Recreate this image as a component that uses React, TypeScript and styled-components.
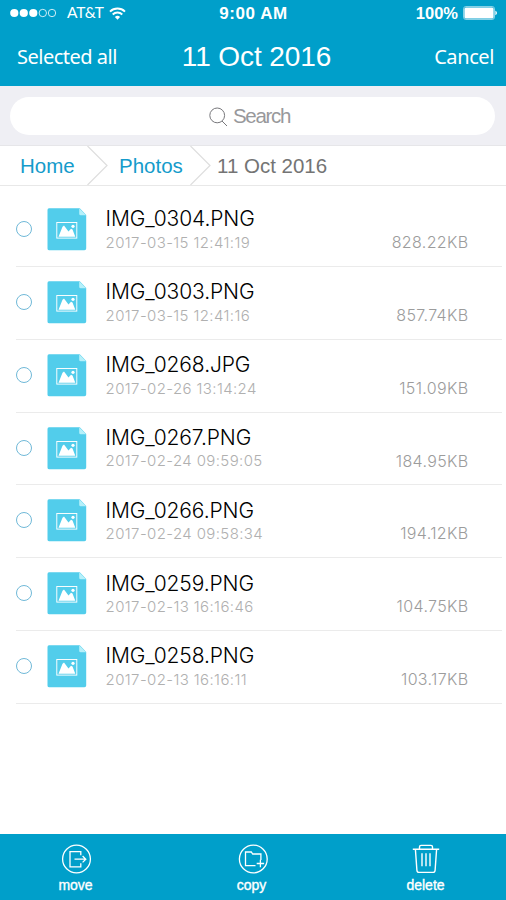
import React from "react";
import styled, { createGlobalStyle } from "styled-components";

const GlobalStyle = createGlobalStyle`
  * { box-sizing: border-box; }
  body { margin: 0; background: #fff; font-family: "Liberation Sans", Arial, sans-serif; }
`;

const Screen = styled.div`
  width: 506px;
  height: 900px;
  display: flex;
  flex-direction: column;
  overflow: hidden;
  background: #fff;
`;

const Header = styled.header`
  flex: none;
  height: 86px;
  background: #009fca;
  color: #fff;
`;

const Bar = styled.div<{ $height: number; $padding: string }>`
  height: ${(p) => p.$height}px;
  padding: ${(p) => p.$padding};
  display: grid;
  grid-template-columns: 1fr auto 1fr;
  align-items: center;
`;

const Cluster = styled.div<{ $end?: boolean }>`
  display: flex;
  align-items: center;
  justify-content: ${(p) => (p.$end ? "flex-end" : "flex-start")};
`;

const Label = styled.span<{ $size: number; $spacing?: number; $font?: string; $weight?: number }>`
  font-family: ${(p) => p.$font ?? '"Liberation Sans"'}, sans-serif;
  font-size: ${(p) => p.$size}px;
  font-weight: ${(p) => p.$weight ?? 400};
  letter-spacing: ${(p) => p.$spacing ?? 0}px;
  line-height: 1;
  white-space: nowrap;
`;

const Carrier = styled(Label)`
  margin: 0 5px 0 10px;
`;

const Percent = styled(Label)`
  margin-right: 5px;
  padding-top: 1px;
`;

const Title = styled.h1`
  margin: 0;
  padding: 1px 0 0 2px;
  font-size: 28px;
  line-height: 32px;
  font-weight: 400;
  letter-spacing: -0.1px;
`;

const NavButton = styled.button<{ $end?: boolean }>`
  justify-self: ${(p) => (p.$end ? "end" : "start")};
  border: 0;
  padding: 2px 0 0;
  background: none;
  color: #fff;
  font: 400 20px/24px "Noto Sans", sans-serif;
  letter-spacing: ${(p) => (p.$end ? -0.4 : -0.5)}px;
  white-space: nowrap;
`;

const SearchArea = styled.div`
  flex: none;
  height: 60px;
  padding: 11px 11px 11px 10px;
  background: #efeff4;
  border-bottom: 1px solid #e6e6e9;
`;

const SearchField = styled.div`
  height: 38px;
  border-radius: 19px;
  background: #fff;
  color: #98989b;
  display: flex;
  align-items: center;
  padding: 1px 0 0 199px;
  gap: 5px;
`;

const Crumbs = styled.nav`
  flex: none;
  height: 40px;
  display: flex;
  align-items: center;
  border-bottom: 1px solid #e8e8e8;
`;

const Crumb = styled.span<{ $current?: boolean; $width?: number; $left: number }>`
  flex: none;
  width: ${(p) => (p.$width ? `${p.$width}px` : "auto")};
  padding-left: ${(p) => p.$left}px;
  padding-top: 1px;
  font-size: 20.5px;
  line-height: 24px;
  white-space: nowrap;
  color: ${(p) => (p.$current ? "#747474" : "#149bcb")};
`;

const FileList = styled.ul`
  flex: 1;
  margin: 0;
  padding: 8px 0 0;
  list-style: none;
`;

const FileRow = styled.li`
  height: 72.86px;
  margin: 0 4px 0 16px;
  padding-right: 34px;
  display: flex;
  border-bottom: 1px solid #ebebeb;
`;

const Radio = styled.span`
  width: 16px;
  height: 16px;
  margin: 27px 15px 0 0;
  border: 1px solid #70b9d8;
  border-radius: 50%;
`;

const FileIcon = styled.svg`
  width: 40px;
  height: 43px;
  margin-top: 14px;
`;

const FileText = styled.div`
  flex: 1;
  margin-left: 18.6px;
  padding-top: 12.3px;
  font-family: Inter, sans-serif;
  white-space: nowrap;
`;

const FileName = styled.div`
  font-size: 21px;
  line-height: 26px;
  letter-spacing: -0.1px;
  font-weight: 350;
  color: #000;
`;

const FileDate = styled.div`
  font-size: 15px;
  line-height: 20px;
  margin-top: 0.6px;
  letter-spacing: 0.38px;
  font-weight: 350;
  color: #b0b0b0;
`;

const FileSize = styled.div`
  align-self: flex-start;
  margin-top: 38px;
  font: 350 16px/20px Inter, sans-serif;
  letter-spacing: 0.36px;
  margin-right: -0.5px;
  color: #9c9c9c;
`;

const Footer = styled.footer`
  flex: none;
  height: 66px;
  display: grid;
  grid-template-columns: 151px 201px 147px;
  background: #009fca;
`;

const Action = styled.button`
  border: 0;
  padding: 9px 0 0;
  background: none;
  color: #fff;
  display: flex;
  flex-direction: column;
  align-items: center;
  gap: 2px;
`;

const ActionLabel = styled(Label)`
  -webkit-text-stroke: 0.35px #fff;
  line-height: 16px;
`;

const files = [
  ["IMG_0304.PNG", "2017-03-15 12:41:19", "828.22KB"],
  ["IMG_0303.PNG", "2017-03-15 12:41:16", "857.74KB"],
  ["IMG_0268.JPG", "2017-02-26 13:14:24", "151.09KB"],
  ["IMG_0267.PNG", "2017-02-24 09:59:05", "184.95KB"],
  ["IMG_0266.PNG", "2017-02-24 09:58:34", "194.12KB"],
  ["IMG_0259.PNG", "2017-02-13 16:16:46", "104.75KB"],
  ["IMG_0258.PNG", "2017-02-13 16:16:11", "103.17KB"],
];

const Signal = () => (
  <svg width="47" height="10" viewBox="0 0 47 10">
    {[4.3, 13.8, 23.3].map((x) => <circle key={x} cx={x} cy="5" r="4.1" fill="#fff" />)}
    {[32.8, 42].map((x) => <circle key={x} cx={x} cy="5" r="3.7" fill="none" stroke="#fff" strokeWidth=".8" />)}
  </svg>
);

const Wifi = () => (
  <svg width="17" height="13" viewBox="0 0 17 13" fill="none" stroke="#fff" strokeWidth="1.9">
    <path d="M1 4.6a10.8 10.8 0 0 1 15 0M3.7 7.5a6.9 6.9 0 0 1 9.6 0" />
    <path d="M8.5 12.7 5.9 10a3.8 3.8 0 0 1 5.2 0Z" fill="#fff" stroke="none" />
  </svg>
);

const Battery = () => (
  <svg width="34" height="14" viewBox="0 0 34 14">
    <rect x=".5" y=".5" width="31" height="13" rx="2.4" fill="none" stroke="#a8deee" strokeWidth=".8" />
    <rect x="1.4" y="1.4" width="29.2" height="11.2" rx="1.5" fill="#fff" />
    <path d="M32.4 4.8c2 .7 2 3.7 0 4.4Z" fill="#fff" />
  </svg>
);

const Magnifier = () => (
  <svg width="19" height="20" viewBox="0 0 19 20" fill="none" stroke="#77777b" strokeWidth="1">
    <circle cx="8.2" cy="8.4" r="7.4" />
    <path d="m13 14 5 5" />
  </svg>
);

const Chevron = () => (
  <svg width="21" height="39" viewBox="0 0 21 39" fill="none" stroke="#dedede" strokeWidth="1.2">
    <path d="M.5 0 20 19.5.5 39" />
  </svg>
);

const PictureFile = () => (
  <FileIcon viewBox="0 0 40 43">
    <path d="M2 .3h30.8L39.2 7v33.5a1.8 1.8 0 0 1-1.8 1.8H2A1.6 1.6 0 0 1 .5 40.6V2A1.7 1.7 0 0 1 2 .3Z" fill="#52cdeb" />
    <path d="M32.2.3 39.2 7.2h-5.5a1.5 1.5 0 0 1-1.5-1.5Z" fill="#b5f0fa" />
    <rect x="9.8" y="14.5" width="20" height="15.6" fill="none" stroke="#fff" strokeWidth=".95" />
    <path d="M11.5 28.8 15.5 18.8 17 17.6 21.5 23.5 24 20.8 25.5 21.4 28.3 28.8Z" fill="#fff" />
    <circle cx="26" cy="18.3" r="1.6" fill="#fff" />
  </FileIcon>
);

const MoveIcon = () => (
  <svg width="32" height="32" viewBox="0 0 32 32" fill="none" stroke="#fff" strokeWidth="1.3">
    <circle cx="16.5" cy="16" r="13.9" />
    <path d="M20.8 12.2V8.6H10V23.8h10.8V20.3M14.5 16.2h11.2M22.6 13l3.2 3.2-3.2 3.2" />
  </svg>
);

const CopyIcon = () => (
  <svg width="32" height="32" viewBox="0 0 32 32" fill="none" stroke="#fff" strokeWidth="1.3">
    <circle cx="17.3" cy="16" r="13.9" />
    <path d="M19.5 22.6H9.5V9h5.8l1.4 2h8.2v6M24.4 16.8v7.4M20.7 20.5h7.4" />
  </svg>
);

const TrashIcon = () => (
  <svg width="32" height="32" viewBox="0 0 32 32" fill="none" stroke="#fff" strokeWidth="1.4">
    <path d="M2.8 6.2h26.4M9.5 6V4c0-1 .7-1.6 1.6-1.6h9.8c1 0 1.6.6 1.6 1.6v2M5.4 6.2l1.5 21c.1 1.5.9 2.2 2.3 2.2h13.6c1.4 0 2.2-.7 2.3-2.2l1.5-21M12 10.3v13M16 10.3v13M20 10.3v13" />
  </svg>
);

export default function App() {
  return (
    <>
      <GlobalStyle />
      <Screen>
        <Header>
          <Bar $height={26} $padding="0 9px 0 10px">
            <Cluster>
              <Signal />
              <Carrier $size={15.5} $font="Lato" $spacing={-0.2}>AT&amp;T</Carrier>
              <Wifi />
            </Cluster>
            <Label $size={17} $weight={700} $spacing={0.55}>9:00 AM</Label>
            <Cluster $end>
              <Percent $size={16.5} $weight={700}>100%</Percent>
              <Battery />
            </Cluster>
          </Bar>
          <Bar $height={60} $padding="0 12px 0 17px">
            <NavButton>Selected all</NavButton>
            <Title>11 Oct 2016</Title>
            <NavButton $end>Cancel</NavButton>
          </Bar>
        </Header>
        <SearchArea>
          <SearchField>
            <Magnifier />
            <Label $size={20.5} $spacing={-1.3}>Search</Label>
          </SearchField>
        </SearchArea>
        <Crumbs>
          <Crumb $left={20} $width={87}>Home</Crumb>
          <Chevron />
          <Crumb $left={11} $width={82}>Photos</Crumb>
          <Chevron />
          <Crumb $left={6} $current>11 Oct 2016</Crumb>
        </Crumbs>
        <FileList>
          {files.map(([name, date, size]) => (
            <FileRow key={name}>
              <Radio />
              <PictureFile />
              <FileText>
                <FileName>{name}</FileName>
                <FileDate>{date}</FileDate>
              </FileText>
              <FileSize>{size}</FileSize>
            </FileRow>
          ))}
        </FileList>
        <Footer>
          <Action><MoveIcon /><ActionLabel $size={14}>move</ActionLabel></Action>
          <Action><CopyIcon /><ActionLabel $size={14}>copy</ActionLabel></Action>
          <Action><TrashIcon /><ActionLabel $size={14}>delete</ActionLabel></Action>
        </Footer>
      </Screen>
    </>
  );
}
